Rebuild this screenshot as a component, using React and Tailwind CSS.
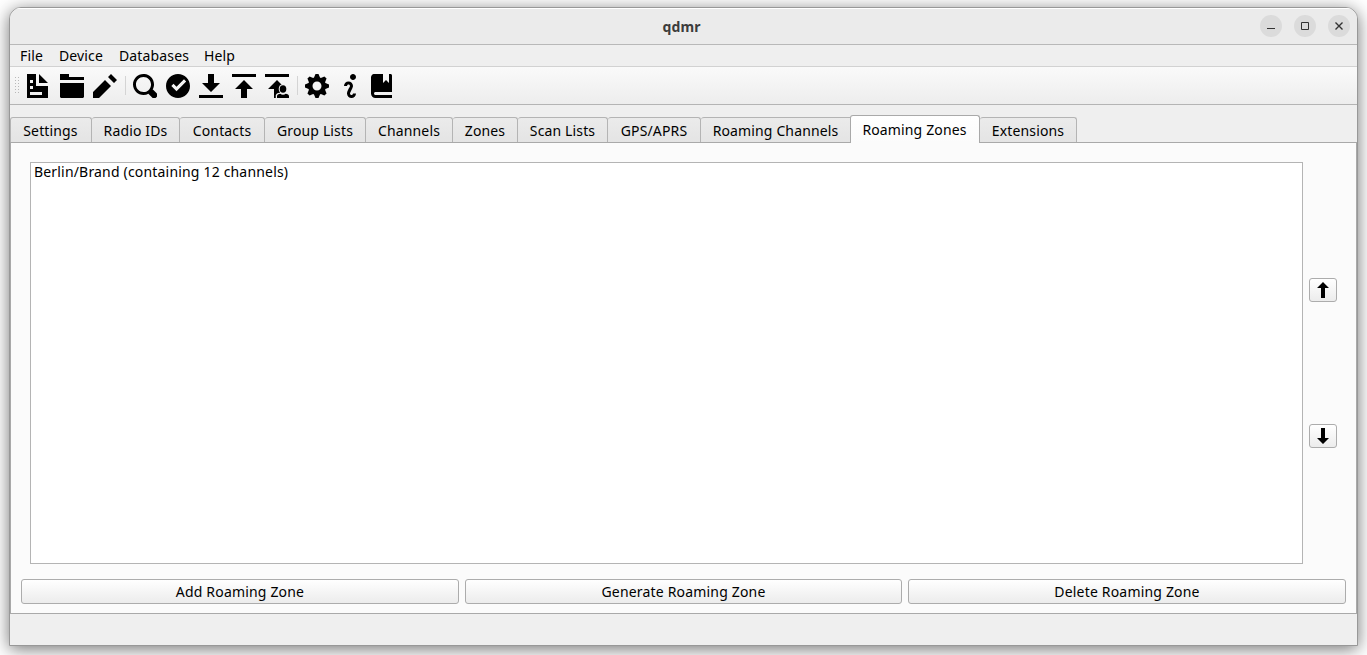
const ICONS = {
  document: 'M0 0v8h7v-4h-4v-4h-3zm4 0v3h3l-3-3zm-3 2h1v1h-1v-1zm0 2h1v1h-1v-1zm0 2h4v1h-4v-1z',
  folder: 'M0 0v2h8v-1h-5v-1h-3zm0 3v4.5c0 .28.22.5.5.5h7c.28 0 .5-.22.5-.5v-4.5h-8z',
  pencil: 'M6 0l-1 1 2 2 1-1-2-2zm-2 2l-4 4v2h2l4-4-2-2z',
  search: 'M3.5 0c-1.93 0-3.5 1.57-3.5 3.5s1.57 3.5 3.5 3.5c.59 0 1.17-.14 1.66-.41a1 1 0 0 0 .13.13l1 1a1.02 1.02 0 1 0 1.44-1.44l-1-1a1 1 0 0 0-.16-.13c.27-.49.44-1.06.44-1.66 0-1.93-1.55-3.5-3.5-3.5zm0 1c1.39 0 2.5 1.11 2.5 2.5 0 .66-.24 1.27-.66 1.72-.01.01-.02.02-.03.03a1 1 0 0 0-.13.13c-.44.4-1.04.63-1.69.63-1.39 0-2.5-1.11-2.5-2.5s1.11-2.5 2.5-2.5z',
  check: 'M4 0c-2.2 0-4 1.8-4 4s1.8 4 4 4 4-1.8 4-4-1.8-4-4-4zm2 1.78l.72.72-3.22 3.22-1.72-1.72.72-.72 1 1 2.5-2.5z',
  download: 'M3 0v3h-2l3 3 3-3h-2v-3h-2zm-3 7v1h8v-1h-8z',
  upload: 'M0 0v1h8v-1h-8zm4 2l-3 3h2v3h2v-3h2l-3-3z',
  cog: 'M3.5 0l-.5 1.19c-.1.03-.19.08-.28.13l-1.19-.5-.72.72.5 1.19c-.05.1-.09.18-.13.28l-1.19.5v1l1.19.5c.04.1.08.18.13.28l-.5 1.19.72.72 1.19-.5c.09.04.18.09.28.13l.5 1.19h1l.5-1.19c.09-.04.19-.08.28-.13l1.19.5.72-.72-.5-1.19c.04-.09.09-.19.13-.28l1.19-.5v-1l-1.19-.5c-.03-.09-.08-.19-.13-.28l.5-1.19-.72-.72-1.19.5c-.09-.04-.19-.09-.28-.13l-.5-1.19h-1zm.5 2.5c.83 0 1.5.67 1.5 1.5s-.67 1.5-1.5 1.5-1.5-.67-1.5-1.5.67-1.5 1.5-1.5z',
  info: 'M5 0c-.55 0-1 .45-1 1s.45 1 1 1 1-.45 1-1-.45-1-1-1zm-1.5 2.500c-.83 0-1.500.67-1.500 1.500h1c0-.28.22-.5.5-.5s.5.22.5.5-1 1.640-1 2.500c0 .86.67 1.500 1.500 1.500s1.500-.67 1.500-1.500h-1c0 .28-.22.5-.5.5s-.5-.22-.5-.5c0-.36 1-1.840 1-2.500 0-.81-.67-1.500-1.500-1.500z',
  book: 'M1 0l-.09.03c-.46.1-.78.41-.88.88l-.03.09v5.5c0 .83.67 1.5 1.5 1.5h5.5v-1h-5.5c-.28 0-.5-.22-.5-.5s.22-.5.5-.5h5.5v-5.5c0-.28-.22-.5-.5-.5h-.5v3l-1-1-1 1v-3h-3z',
  up: 'M4 0l-3 3h2v5h2v-5h2l-3-3z',
  down: 'M3 0v5h-2l3 3 3-3h-2v-5h-2z',
};

function Icon({ name, className = 'size-6' }) {
  return (
    <svg viewBox="0 0 8 8" className={`block shrink-0 ${className}`}>
      <path d={ICONS[name]} />
    </svg>
  );
}

function UploadUserIcon() {
  return (
    <svg viewBox="0 0 24 24" className="block size-6 shrink-0">
      <path d="M0 0h24v3H0zM12 6L3 15h6v9h6V15h6z" />
      <ellipse cx="18" cy="15" rx="4.300" ry="4.800" fill="#f2f2f2" />
      <path d="M10.800 24v-2.500c0-1.500 1.800-2.700 4-2.700h6.400c2 0 2.800 1 2.800 2.700V24z" fill="#f2f2f2" />
      <ellipse cx="18" cy="15" rx="3.300" ry="3.800" />
      <path d="M12 24v-2c0-1.200 1.500-2 3.300-2.300.7.700 1.700 1.100 2.700 1.100s2-.4 2.700-1.100c1.800.3 3.300 1.100 3.300 2.300v2z" />
    </svg>
  );
}

const MENUS = [
  ['File', 'w-[39px]'],
  ['Device', 'w-[60px]'],
  ['Databases', 'w-[85px]'],
  ['Help', 'w-[60px]'],
];

const TABS = [
  ['Settings', 'w-[82px]'],
  ['Radio IDs', 'w-[88px]'],
  ['Contacts', 'w-[85px]'],
  ['Group Lists', 'w-[101px]'],
  ['Channels', 'w-[87px]'],
  ['Zones', 'w-[65px]'],
  ['Scan Lists', 'w-[90px]'],
  ['GPS/APRS', 'w-[93px]'],
  ['Roaming Channels', 'w-[149px]'],
  ['Roaming Zones', 'w-[130px]', true],
  ['Extensions', 'w-[97px]'],
];

function Tab({ label, width, active, first, beforeActive }) {
  if (active) {
    return (
      <div className={`${width} z-10 -mb-px flex h-7 items-center justify-center rounded-t-[3px] border border-b-0 border-[#a9a9a9] bg-gradient-to-b from-white to-[#fbfbfb] pt-px pr-px`}>
        {label}
      </div>
    );
  }
  return (
    <div className={`${width} flex h-[25px] items-center justify-center rounded-t-[3px] border border-b-0 border-[#b4b4b4] bg-gradient-to-b from-[#ebebeb] to-[#e4e4e4] ${first ? 'pr-px' : 'border-l-0'} ${beforeActive ? 'rounded-tr-none border-r-0' : ''} pt-px`}>
      {label}
    </div>
  );
}

function Separator() {
  return <div className="mr-[7px] h-[19px] w-px bg-[#d4d4d4]" />;
}

function PushButton({ children, className }) {
  return (
    <button className={`flex h-[25px] items-center justify-center rounded-[3px] border border-[#acacac] bg-gradient-to-b from-white to-[#ececec] tracking-[0.18px] ${className}`}>
      {children}
    </button>
  );
}

function WindowButton({ children }) {
  return (
    <div className="flex size-[22px] items-center justify-center rounded-full bg-[#dbdbdb]">
      <svg viewBox="0 0 22 22" className="size-[22px]" fill="none" stroke="#333">
        {children}
      </svg>
    </div>
  );
}

export default function App() {
  return (
    <div className="h-[655px] w-[1367px] overflow-hidden bg-white pt-[7px] pl-[9px] font-['Noto_Sans',sans-serif] text-[14px] leading-5 tracking-[0.14px] text-black">
      <div className="flex h-[639px] w-[1349px] flex-col overflow-hidden rounded-t-[12px] border border-[#989898] bg-[#efefef] shadow-[0_3px_17px_rgba(0,0,0,0.55)]">
        <header className="flex h-[37px] items-center border-b border-[#b8b8b8] bg-[#ebebeb] shadow-[inset_0_1px_0_#fff]">
          <div className="w-[93px]" />
          <div className="flex-1 pt-px text-center font-bold text-[#3c3c3c]">qdmr</div>
          <div className="flex w-[97px] gap-3">
            <WindowButton><path d="M7 13.500h8" /></WindowButton>
            <WindowButton><path d="M7.500 7.500h7v7h-7z" /></WindowButton>
            <WindowButton><path d="M7.500 7.500l7 7m0-7l-7 7" strokeWidth="1.400" /></WindowButton>
          </div>
        </header>
        <nav className="flex h-[22px] items-center border-b border-[#d2d2d2] pl-[10px]">
          {MENUS.map(([label, width]) => (
            <div key={label} className={width}>{label}</div>
          ))}
        </nav>
        <div className="flex h-[38px] items-center border-b border-[#b4b4b4] bg-gradient-to-b from-[#fafafa] to-[#ededed] pl-[5px]">
          <svg viewBox="0 0 5 17" className="mr-[7px] h-[17px] w-[5px]">
            <path d="M.5 0v17M3.500 0v17" stroke="#b8b8b8" strokeDasharray="1 2" />
          </svg>
          <div className="mr-2 flex gap-[9px]">
            <Icon name="document" />
            <Icon name="folder" />
            <Icon name="pencil" />
          </div>
          <Separator />
          <div className="mr-2 flex gap-[9px]">
            <Icon name="search" />
            <Icon name="check" />
            <Icon name="download" />
            <Icon name="upload" />
            <UploadUserIcon />
          </div>
          <Separator />
          <div className="flex gap-[9px]">
            <Icon name="cog" />
            <Icon name="info" />
            <Icon name="book" />
          </div>
        </div>
        <div className="flex h-[37px] shrink-0 items-end">
          {TABS.map(([label, width, active], i) => (
            <Tab key={label} label={label} width={width} active={active} first={i === 0} beforeActive={Boolean(TABS[i + 1]?.[2])} />
          ))}
        </div>
        <main className="flex h-[472px] flex-col border border-[#a9a9a9] bg-[#fbfbfb] pt-[19px] pr-[10px] pl-[10px]">
          <div className="flex h-[402px] pr-[9px] pl-[9px]">
            <div className="w-[1273px] border border-[#b4b4b4] bg-white pl-[3px] leading-[18px] tracking-[0.18px]">
              Berlin/Brand (containing 12 channels)
            </div>
            <div className="ml-[6px] flex flex-col pt-[116px]">
              <PushButton className="mb-[122px] h-[24px]! w-[28px]"><Icon name="up" className="size-4" /></PushButton>
              <PushButton className="h-[24px]! w-[28px]"><Icon name="down" className="size-4" /></PushButton>
            </div>
          </div>
          <div className="mt-[15px] flex gap-[6px]">
            <PushButton className="w-[438px]">Add Roaming Zone</PushButton>
            <PushButton className="w-[437px]">Generate Roaming Zone</PushButton>
            <PushButton className="w-[438px]">Delete Roaming Zone</PushButton>
          </div>
        </main>
      </div>
    </div>
  );
}
